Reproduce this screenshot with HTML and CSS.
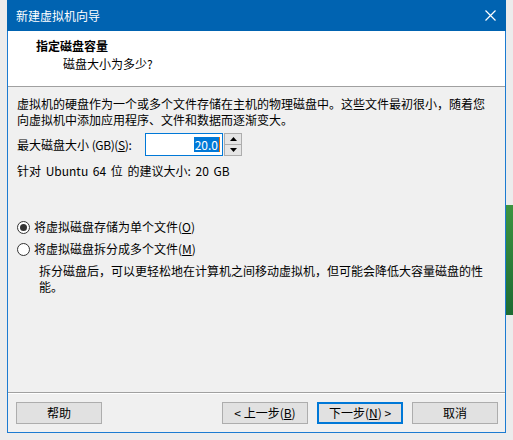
FILE: index.html
```html
<!DOCTYPE html>
<html lang="zh-CN">
<head>
    <meta charset="UTF-8">
    <title>新建虚拟机向导</title>
    <link rel="stylesheet" href="styles.css">
</head>
<body>
    <div class="window">
        <div class="titlebar">
            <span class="title">新建虚拟机向导</span>
            <svg class="close" width="11" height="11" viewBox="0 0 11 11">
                <path d="M0.5 0.5 L10.5 10.5 M10.5 0.5 L0.5 10.5" stroke="#fff" stroke-width="1.2" fill="none"/>
            </svg>
        </div>

        <div class="header">
            <div class="header-title">指定磁盘容量</div>
            <div class="header-sub">磁盘大小为多少?</div>
        </div>

        <div class="main">
            <p class="intro">虚拟机的硬盘作为一个或多个文件存储在主机的物理磁盘中。这些文件最初很小，随着您<br>向虚拟机中添加应用程序、文件和数据而逐渐变大。</p>

            <div class="size-row">
                <span class="size-label">最大磁盘大小 <span class="latin">(GB)(<u>S</u>):</span></span>
                <div class="spin">
                    <div class="spin-input"><span class="selected">20.0</span><span class="caret"></span></div>
                    <div class="spin-btns">
                        <div class="spin-btn">
                            <svg width="7" height="4" viewBox="0 0 7 4"><path d="M3.5 0 L7 4 L0 4 Z" fill="#000"/></svg>
                        </div>
                        <div class="spin-btn">
                            <svg width="7" height="4" viewBox="0 0 7 4"><path d="M0 0 L7 0 L3.5 4 Z" fill="#000"/></svg>
                        </div>
                    </div>
                </div>
            </div>

            <p class="hint">针对 Ubuntu 64 位 的建议大小: 20 GB</p>

            <div class="options">
                <div class="radio checked"><span class="circle"></span>将虚拟磁盘存储为单个文件(<u>O</u>)</div>
                <div class="radio"><span class="circle"></span>将虚拟磁盘拆分成多个文件(<u>M</u>)</div>
                <p class="note">拆分磁盘后，可以更轻松地在计算机之间移动虚拟机，但可能会降低大容量磁盘的性<br>能。</p>
            </div>
        </div>

        <div class="footer">
            <button class="btn">帮助</button>
            <div class="spacer"></div>
            <button class="btn">&lt; 上一步(<u>B</u>)</button>
            <button class="btn primary">下一步(<u>N</u>) &gt;</button>
            <button class="btn">取消</button>
        </div>
    </div>
</body>
</html>
```

FILE: styles.css
```css
html, body {
    margin: 0;
    padding: 0;
}
body {
    width: 513px;
    height: 440px;
    overflow: hidden;
    font-family: "Noto Sans CJK SC", "Noto Sans", sans-serif;
    font-size: 12px;
    color: #000;
    background:
        linear-gradient(#3d9440, #1d6b33) right 205px / 7px 110px no-repeat,
        #ececec;
}
.window {
    box-sizing: border-box;
    margin-left: 7px;
    width: 499px;
    height: 433px;
    display: flex;
    flex-direction: column;
    background-color: #f0f0f0;
    border: 1px solid #1c7bd1;
    border-top: none;
}
.titlebar {
    height: 31px;
    flex: none;
    margin: 0 -1px;
    background-color: #0063b1;
    color: #fff;
    display: flex;
    align-items: center;
    padding: 0 10px 0 9px;
}
.title {
    flex: 1;
    line-height: 16px;
}
.header {
    height: 56px;
    flex: none;
    box-sizing: border-box;
    background-color: #fff;
    border-bottom: 1px solid #a0a0a0;
    padding-top: 7px;
    line-height: 16px;
}
.header-title {
    font-weight: bold;
    padding-left: 28px;
    margin-bottom: 2px;
}
.header-sub {
    padding-left: 55px;
}
.main {
    flex: 1;
    padding: 9px 0 0 9px;
    line-height: 16px;
    white-space: nowrap;
}
p {
    margin: 0;
}
.size-row {
    display: flex;
    align-items: center;
    margin-top: 5px;
    height: 23px;
}
.size-label {
    flex: none;
    width: 128px;
}
.latin {
    letter-spacing: -0.4px;
}
.spin {
    display: flex;
    height: 23px;
}
.spin-input {
    box-sizing: border-box;
    width: 78px;
    height: 23px;
    border: 1px solid #0078d7;
    background-color: #fff;
    display: flex;
    align-items: center;
    justify-content: flex-end;
    padding-right: 2px;
}
.selected {
    background-color: #0078d7;
    color: #fff;
    line-height: 15px;
    padding: 0 1px;
}
.caret {
    width: 1px;
    height: 15px;
    background-color: #f07000;
}
.spin-btns {
    box-sizing: border-box;
    width: 18px;
    margin-left: 1px;
    display: flex;
    flex-direction: column;
    border: 1px solid #adadad;
}
.spin-btn {
    flex: 1;
    display: flex;
    align-items: center;
    justify-content: center;
    background-color: #e5e5e5;
}
.spin-btn + .spin-btn {
    border-top: 1px solid #adadad;
}
.hint {
    margin-top: 7px;
    word-spacing: 2px;
}
.options {
    margin-top: 37px;
}
.radio {
    display: flex;
    align-items: center;
    height: 22px;
}
.circle {
    box-sizing: border-box;
    width: 13px;
    height: 13px;
    margin-right: 4px;
    border: 1px solid #333;
    border-radius: 50%;
    background-color: #fff;
    display: flex;
    align-items: center;
    justify-content: center;
}
.checked .circle::after {
    content: "";
    width: 7px;
    height: 7px;
    border-radius: 50%;
    background-color: #333;
}
.note {
    margin: 3px 0 0 22px;
}
.footer {
    flex: none;
    box-sizing: border-box;
    height: 40px;
    border-top: 1px solid #a0a0a0;
    box-shadow: inset 0 1px 0 #fff;
    display: flex;
    align-items: flex-start;
    gap: 9px;
    padding: 9px 7px 0 8px;
}
.spacer {
    flex: 1;
}
.btn {
    box-sizing: border-box;
    width: 86px;
    height: 22px;
    border: 1px solid #adadad;
    background-color: #e1e1e1;
    font-family: inherit;
    font-size: 12px;
    color: #000;
    padding: 0;
    line-height: 16px;
}
.btn.primary {
    border: 2px solid #0078d7;
}
```
